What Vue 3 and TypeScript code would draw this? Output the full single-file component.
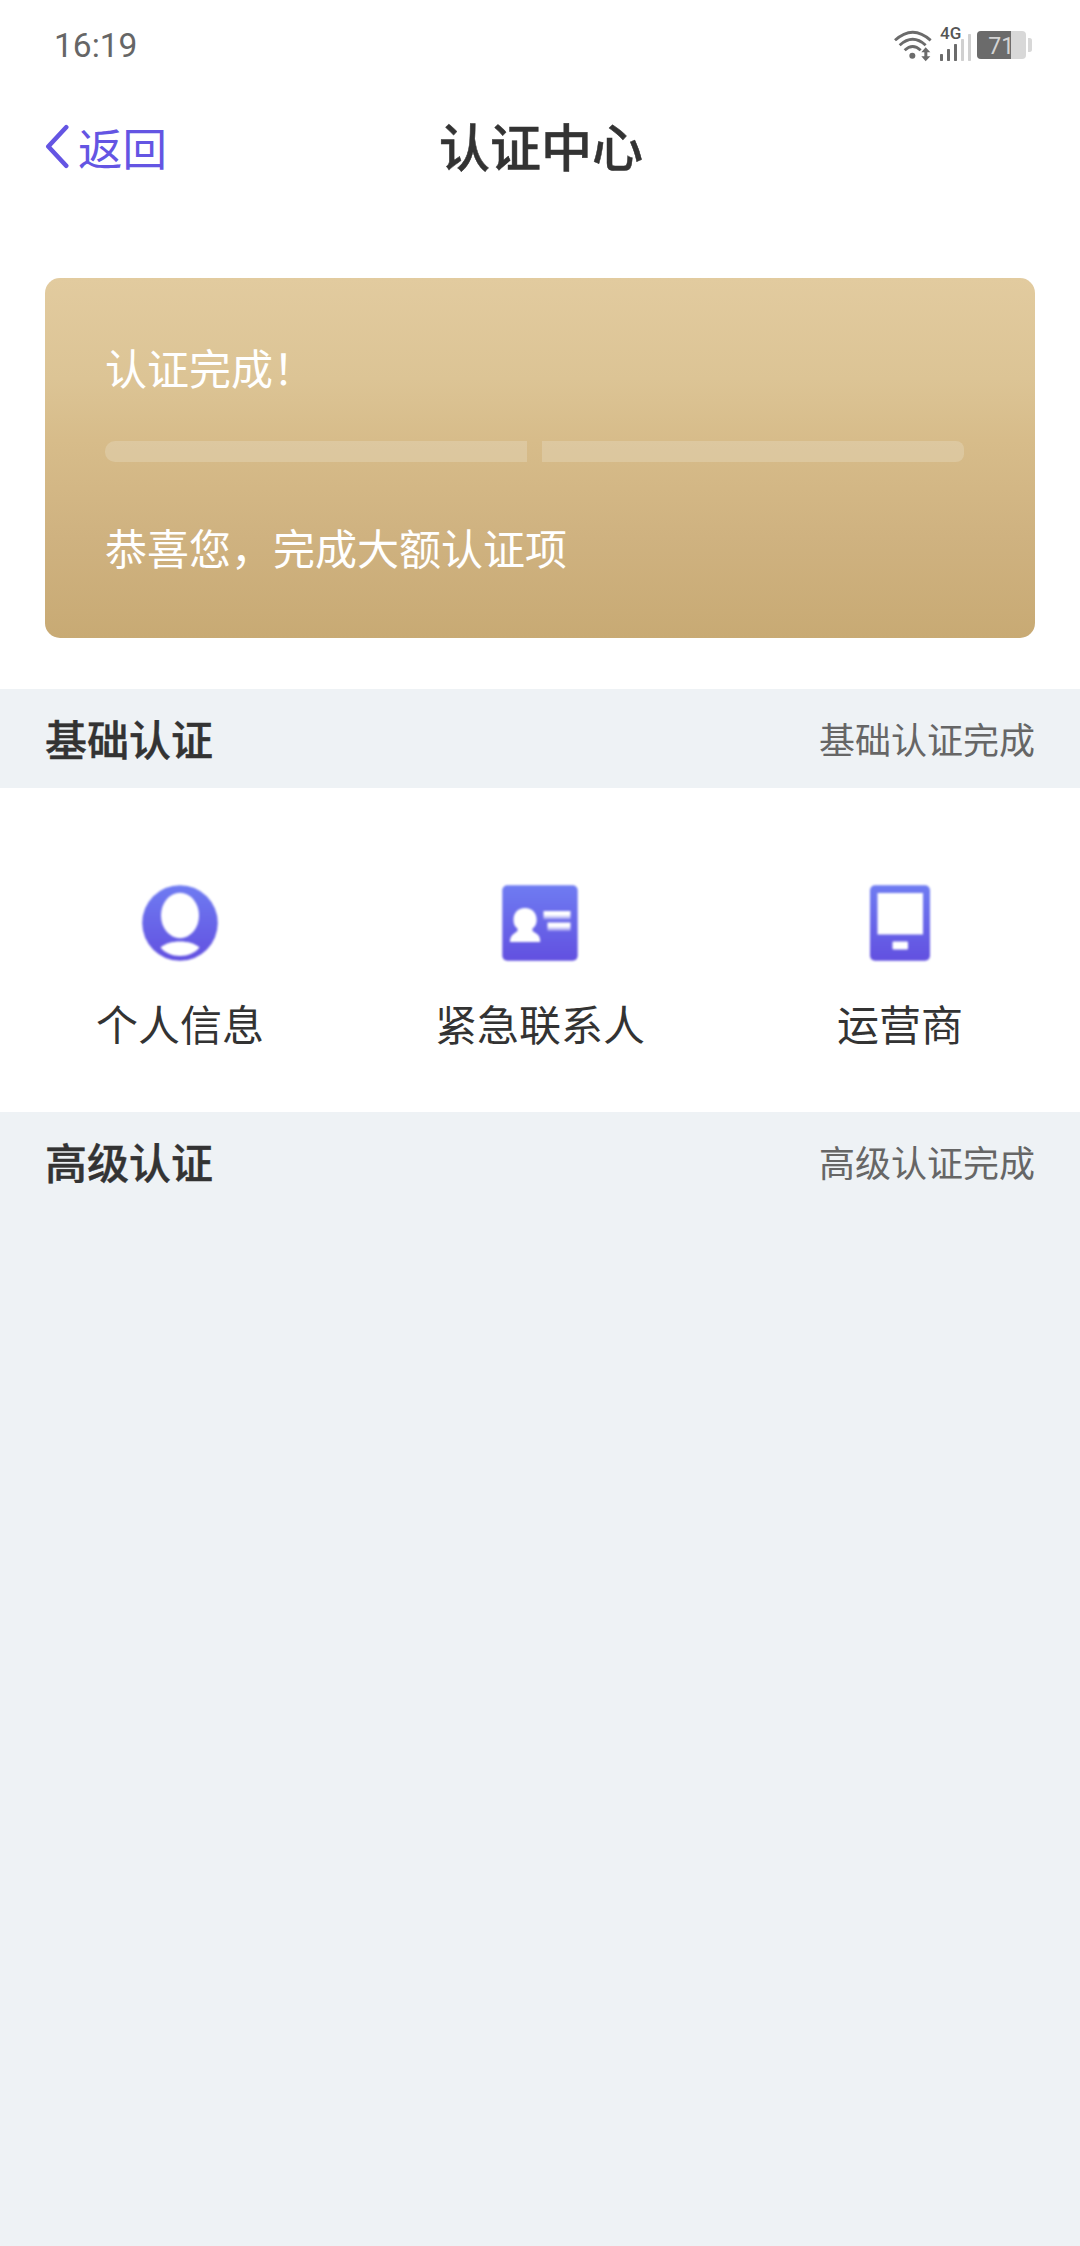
<script setup lang="ts">
interface AuthItem {
  key: 'person' | 'contact' | 'phone'
  label: string
}

const items: AuthItem[] = [
  { key: 'person', label: '个人信息' },
  { key: 'contact', label: '紧急联系人' },
  { key: 'phone', label: '运营商' },
]
</script>

<template>
  <div class="page">
    <header class="status">
      <span class="time">16:19</span>
      <svg class="indicators" viewBox="0 0 600 210">
        <g fill="none" stroke="#6b6b6b" stroke-width="8.5">
          <path d="M105 91Q158 42 212 91" />
          <path d="M119 106Q158 70 197 106" />
          <path d="M134 121Q158 98 182 121" />
        </g>
        <circle cx="157" cy="137" r="9" fill="#6b6b6b" />
        <path d="M197 112L211 127H202V139H211L197 154L184 139H193V127H184Z" fill="#6b6b6b" />
        <text x="240" y="87" class="network" textLength="64" lengthAdjust="spacingAndGlyphs">4G</text>
        <g fill="#6b6b6b">
          <rect x="240" y="132" width="9" height="21" rx="2" />
          <rect x="261" y="117" width="9" height="36" rx="2" />
          <rect x="282" y="102" width="9" height="51" rx="2" />
        </g>
        <g fill="#d0d0d0">
          <rect x="303" y="87" width="9" height="66" rx="2" />
          <rect x="324" y="72" width="9" height="81" rx="2" />
        </g>
        <rect x="351" y="63" width="147" height="84" rx="12" fill="#d8d8d8" />
        <path d="M453 63H363a12 12 0 0 0-12 12v60a12 12 0 0 0 12 12h90z" fill="#6b6b6b" />
        <path d="M504 84h5q7 0 7 8v26q0 8-7 8h-5z" fill="#d8d8d8" />
        <text x="385" y="132" class="level">71</text>
      </svg>
    </header>

    <nav class="nav">
      <a class="back">
        <svg class="chevron" viewBox="0 0 24 46">
          <path d="M21.2 3.2L3.300 22.500L21.200 41.800" fill="none" stroke="#6455e3" stroke-width="4.6" stroke-linecap="round" stroke-linejoin="round" />
        </svg>
        <span>返回</span>
      </a>
      <h1>认证中心</h1>
    </nav>

    <section class="card">
      <p>认证完成！</p>
      <div class="progress"><i></i><i></i></div>
      <p>恭喜您，完成大额认证项</p>
    </section>

    <div class="heading">
      <h2>基础认证</h2>
      <span>基础认证完成</span>
    </div>

    <section class="items">
      <div v-for="item in items" :key="item.key" class="item">
        <svg class="icon" viewBox="0 0 76 76">
          <defs>
            <linearGradient :id="`fill-${item.key}`" gradientUnits="userSpaceOnUse" x1="0" y1="0" x2="0" y2="76">
              <stop offset="0" stop-color="#6f7cf2" />
              <stop offset="1" stop-color="#6250e0" />
            </linearGradient>
            <linearGradient id="line-fade" x1="0" y1="0" x2="0" y2="1">
              <stop offset=".45" stop-color="#fff" />
              <stop offset="1" stop-color="#fff" stop-opacity=".25" />
            </linearGradient>
          </defs>
          <template v-if="item.key === 'person'">
            <circle cx="38" cy="38" r="37.8" :fill="`url(#fill-${item.key})`" />
            <ellipse cx="38" cy="30.5" rx="19" ry="22.8" fill="#fff" />
            <path d="M18.500 62.500C23 58.500 30 56.500 38 56.500S53 58.500 57.500 62.500C53 68 46 71 38 71S23 68 18.500 62.500Z" fill="#fff" />
          </template>
          <template v-else-if="item.key === 'contact'">
            <rect x=".3" y=".3" width="75.4" height="75.4" rx="5" :fill="`url(#fill-${item.key})`" />
            <path d="M23 23C30.500 23 34.700 28 34.700 35C34.700 39 33 42 30.500 43.500V46L35 49C37.500 51 38.200 53 38.200 57H8C8 53 9 51 11.500 49L15.500 46V43.500C13 42 11.500 39 11.500 35C11.500 28 15.500 23 23 23Z" fill="#fff" />
            <rect x="41.500" y="26" width="27" height="8.500" fill="url(#line-fade)" />
            <rect x="45.500" y="37.500" width="23" height="8.500" fill="url(#line-fade)" />
          </template>
          <template v-else>
            <rect x="8" y=".3" width="60" height="75.400" rx="5" :fill="`url(#fill-${item.key})`" />
            <rect x="15.500" y="8" width="45.500" height="41.500" fill="#fff" />
            <rect x="30.500" y="56.500" width="15.500" height="8" rx="1" fill="#fff" />
          </template>
        </svg>
        <span>{{ item.label }}</span>
      </div>
    </section>

    <div class="heading">
      <h2>高级认证</h2>
      <span>高级认证完成</span>
    </div>
  </div>
</template>

<style>
body {
  background: #eef2f5;
}
</style>

<style scoped>
.page {
  width: 1080px;
  min-height: 2246px;
  display: flow-root;
  background: linear-gradient(#fff 689px, #eef2f5 689px);
  color: #333;
  font-family: Roboto, 'Noto Sans CJK SC', sans-serif;
}
.page h1,
.page h2,
.page p {
  margin: 0;
}
.status {
  height: 90px;
  box-sizing: border-box;
  padding: 10px 20px 0 54px;
  display: flex;
  justify-content: space-between;
}
.time {
  font: 33.5px/72px Roboto, sans-serif;
  color: #666;
}
.indicators {
  width: 200px;
  height: 70px;
}
.network {
  font: 500 47px Roboto, sans-serif;
  fill: #555;
}
.level {
  font: 69px Roboto, sans-serif;
  fill: #d4d4d4;
}
.nav {
  height: 116px;
  display: grid;
  grid-template-columns: 1fr auto 1fr;
  align-items: center;
  font-family: 'Noto Sans CJK SC', sans-serif;
}
.back {
  display: flex;
  align-items: center;
  padding-left: 45px;
  gap: 9px;
  color: #6455e3;
  font-size: 44.5px;
  line-height: 60px;
}
.back span {
  margin-top: -3px;
}
.chevron {
  width: 24px;
  height: 46px;
  margin-top: -2px;
}
.nav h1 {
  font-size: 51px;
  font-weight: 500;
  line-height: 60px;
  margin: -6px -1px 0 1px;
  -webkit-text-stroke: 0.5px #333;
}
.card {
  height: 360px;
  box-sizing: border-box;
  margin: 72px 45px 51px;
  padding: 59px 71px 0 60px;
  border-radius: 15px;
  background: linear-gradient(#e2cb9f 0%, #dcc495 28%, #d7bc8a 45%, #cfb280 72%, #c8aa74 100%);
  color: #fff;
  font-family: 'Noto Sans CJK SC', sans-serif;
  font-size: 42px;
  line-height: 60px;
}
.progress {
  display: flex;
  gap: 15px;
  margin: 44px 0 55px;
}
.progress i {
  flex: 1;
  height: 21px;
  background: rgba(228, 216, 187, 0.45);
}
.progress i:first-child {
  border-radius: 10px 0 0 10px;
}
.progress i:last-child {
  border-radius: 0 8px 8px 0;
}
.heading {
  height: 99px;
  box-sizing: border-box;
  padding: 0 45px 2px;
  display: flex;
  align-items: center;
  justify-content: space-between;
  background: #eef2f5;
  font-family: 'Noto Sans CJK SC', sans-serif;
}
.heading h2 {
  font-size: 42px;
  font-weight: 500;
  line-height: 60px;
  -webkit-text-stroke: 0.4px #333;
}
.heading span {
  font-size: 36px;
  line-height: 60px;
  color: #666;
}
.items {
  height: 324px;
  display: flex;
  background: #fff;
  font-family: 'Noto Sans CJK SC', sans-serif;
}
.item {
  flex: 1;
  display: flex;
  flex-direction: column;
  align-items: center;
  padding-top: 97px;
  font-size: 42px;
  line-height: 60px;
}
.icon {
  width: 76px;
  height: 76px;
  margin-bottom: 32px;
  filter: blur(0.8px);
}
</style>
